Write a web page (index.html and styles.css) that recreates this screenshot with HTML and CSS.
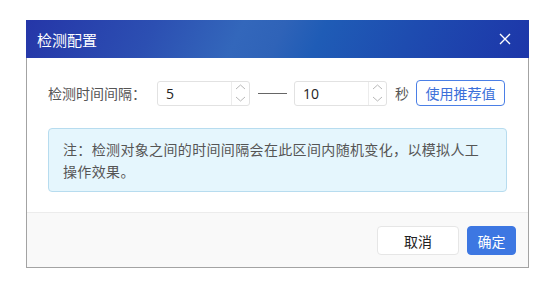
FILE: index.html
```html
<!DOCTYPE html>
<html lang="zh-CN">
<head>
    <meta charset="UTF-8">
    <title>检测配置</title>
    <link rel="stylesheet" href="styles.css">
</head>
<body>
    <div class="dialog">
        <div class="dialog-header">
            <span class="dialog-title">检测配置</span>
            <svg class="close-icon" width="12" height="12" viewBox="0 0 12 12">
                <path d="M1 1 L11 11 M11 1 L1 11" stroke="#fff" stroke-width="1.4" fill="none"/>
            </svg>
        </div>

        <div class="dialog-body">
            <div class="form-row">
                <span class="label">检测时间间隔：</span>
                <div class="num-input">
                    <span class="num-value">5</span>
                    <div class="spinner">
                        <svg width="17" height="11" viewBox="0 0 17 11"><path d="M4 7 L8.5 3 L13 7" stroke="#b8b8b8" fill="none"/></svg>
                        <svg width="17" height="11" viewBox="0 0 17 11"><path d="M4 4 L8.5 8 L13 4" stroke="#b8b8b8" fill="none"/></svg>
                    </div>
                </div>
                <span class="dash"></span>
                <div class="num-input">
                    <span class="num-value">10</span>
                    <div class="spinner">
                        <svg width="17" height="11" viewBox="0 0 17 11"><path d="M4 7 L8.5 3 L13 7" stroke="#b8b8b8" fill="none"/></svg>
                        <svg width="17" height="11" viewBox="0 0 17 11"><path d="M4 4 L8.5 8 L13 4" stroke="#b8b8b8" fill="none"/></svg>
                    </div>
                </div>
                <span class="unit">秒</span>
                <button class="btn-outline">使用推荐值</button>
            </div>

            <div class="tip-box">注：检测对象之间的时间间隔会在此区间内随机变化，以模拟人工操作效果。</div>
        </div>

        <div class="dialog-footer">
            <button class="btn btn-cancel">取消</button>
            <button class="btn btn-primary">确定</button>
        </div>
    </div>
</body>
</html>
```

FILE: styles.css
```css
body {
    margin: 0;
    background: #fff;
    font-family: "Noto Sans CJK SC", "Noto Sans", sans-serif;
    font-size: 14px;
}
.dialog {
    width: 501px;
    margin: 20px 0 0 26px;
    border: 1px solid #a3a3a3;
    border-top: none;
    background: #fff;
}
.dialog-header {
    height: 38px;
    margin: 0 -1px;
    padding: 0 18px 0 11px;
    display: flex;
    align-items: center;
    justify-content: space-between;
    background: linear-gradient(115deg, #2536a8 0%, #2c4fb2 25%, #3367bb 42%, #2f63b8 50%, #1f5cb6 58%, #1e4cb0 75%, #1d36a9 100%);
    color: #fff;
}
.dialog-title {
    font-size: 15px;
}
.dialog-body {
    padding: 22px 21px 20px 21px;
}
.form-row {
    display: flex;
    align-items: center;
    color: #555;
}
.label {
    width: 99px;
    margin-right: 10px;
}
.num-input {
    width: 91px;
    height: 23px;
    border: 1px solid #e2e2e2;
    border-radius: 3px;
    display: flex;
    align-items: stretch;
}
.num-value {
    flex: 1;
    padding-left: 8px;
    line-height: 23px;
    color: #222;
    font-family: "Open Sans", "Noto Sans", sans-serif;
    font-size: 14px;
}
.spinner {
    width: 17px;
    border-left: 1px solid #ececec;
    display: flex;
    flex-direction: column;
    justify-content: center;
}
.spinner svg {
    display: block;
}
.dash {
    width: 29px;
    height: 1px;
    margin: 1px 7px 0 8px;
    background: #666;
}
.unit {
    margin: 0 7px 0 8px;
}
.btn-outline {
    height: 26px;
    width: 89px;
    padding: 0;
    border: 1px solid #4b7fe6;
    border-radius: 4px;
    background: #fff;
    color: #3b6fd9;
    font-family: inherit;
    font-size: 14px;
}
.tip-box {
    margin-top: 22px;
    padding: 9px 20px 9px 14px;
    border: 1px solid #b7dcef;
    border-radius: 4px;
    background: #e5f6fd;
    color: #555;
    line-height: 22px;
    letter-spacing: 0.35px;
}
.dialog-footer {
    border-top: 1px solid #ececec;
    background: #f9f9f9;
    padding: 13px 12px 12px 0;
    display: flex;
    justify-content: flex-end;
    gap: 8px;
}
.btn {
    height: 29px;
    border-radius: 4px;
    font-family: inherit;
    font-size: 14px;
    padding: 0;
}
.btn-cancel {
    width: 82px;
    border: 1px solid #e6e6e6;
    background: #fff;
    color: #222;
}
.btn-primary {
    width: 49px;
    border: 1px solid #3d77e2;
    background: #3d77e2;
    color: #fff;
}
```
